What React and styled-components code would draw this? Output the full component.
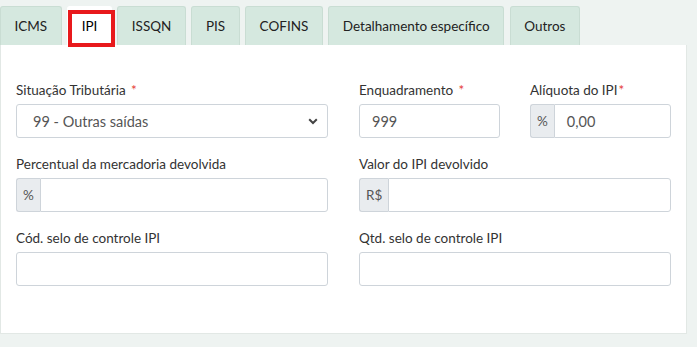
import React from "react";
import styled, { createGlobalStyle } from "styled-components";

const GlobalStyle = createGlobalStyle`
  body {
    margin: 0;
    background: #eef3f1;
    font-family: Lato, "Noto Sans", sans-serif;
    font-size: 13.5px;
    color: #333;
  }
`;

const tabs = ["ICMS", "IPI", "ISSQN", "PIS", "COFINS", "Detalhamento específico", "Outros"];

const Chevron = () => (
  <svg width="10" height="7" viewBox="0 0 10 7">
    <path d="M1.2 1.3 L5 5 L8.8 1.3" fill="none" stroke="#444" strokeWidth="2" />
  </svg>
);

const App = () => {
  return (
    <Page>
      <GlobalStyle />
      <TabBar>
        {tabs.map((t) => (
          <Tab key={t} active={t === "IPI"}>
            {t}
            {t === "IPI" && <Highlight />}
          </Tab>
        ))}
      </TabBar>
      <Panel>
        <Grid>
          <Field>
            <Label>
              Situação Tributária <Req spaced>*</Req>
            </Label>
            <Select>
              <span>99 - Outras saídas</span>
              <Chevron />
            </Select>
          </Field>
          <SubGrid>
            <Field>
              <Label>
                Enquadramento <Req spaced>*</Req>
              </Label>
              <Input>999</Input>
            </Field>
            <Field>
              <Label>
                Alíquota do IPI<Req>*</Req>
              </Label>
              <Group>
                <Addon>%</Addon>
                <Input grouped>0,00</Input>
              </Group>
            </Field>
          </SubGrid>
          <Field>
            <Label>Percentual da mercadoria devolvida</Label>
            <Group>
              <Addon>%</Addon>
              <Input grouped />
            </Group>
          </Field>
          <Field>
            <Label>Valor do IPI devolvido</Label>
            <Group>
              <Addon>R$</Addon>
              <Input grouped />
            </Group>
          </Field>
          <Field>
            <Label>Cód. selo de controle IPI</Label>
            <Input />
          </Field>
          <Field>
            <Label>Qtd. selo de controle IPI</Label>
            <Input />
          </Field>
        </Grid>
      </Panel>
    </Page>
  );
};

export default App;

const Page = styled.div`
  width: 687px;
  padding-top: 6px;
`;

const TabBar = styled.div`
  display: flex;
  gap: 5.5px;
  height: 39px;
`;

const Tab = styled.div`
  position: relative;
  padding: 0 13.5px;
  line-height: 38px;
  background: ${(p) => (p.active ? "#fff" : "#d5e8df")};
  border: 1px solid ${(p) => (p.active ? "#fff" : "#c9ddd3")};
  border-bottom: none;
  border-radius: 3px 3px 0 0;
  color: ${(p) => (p.active ? "#000" : "#222")};
  white-space: nowrap;
`;

const Highlight = styled.span`
  position: absolute;
  left: 0;
  top: 3px;
  right: -4px;
  bottom: -2px;
  border: 4px solid #e8191c;
`;

const Panel = styled.div`
  background: #fff;
  border: 1px solid #e2e8e5;
  border-top: none;
  padding: 35px 15px 47px;
`;

const Grid = styled.div`
  display: grid;
  grid-template-columns: 1fr 1fr;
  column-gap: 31px;
  row-gap: 16px;
`;

const SubGrid = styled.div`
  display: grid;
  grid-template-columns: 1fr 1fr;
  column-gap: 30px;
`;

const Field = styled.div`
  display: flex;
  flex-direction: column;
`;

const Label = styled.div`
  line-height: 20px;
  margin-bottom: 4px;
  color: #333;
`;

const Req = styled.span`
  color: #e53935;
  margin-left: ${(p) => (p.spaced ? "2px" : "1px")};
`;

const Select = styled.div`
  height: 34px;
  box-sizing: border-box;
  border: 1px solid #ced4da;
  border-radius: 3px;
  padding: 0 9px 0 16px;
  display: flex;
  align-items: center;
  justify-content: space-between;
  color: #555;
  font-size: 14.5px;
`;

const Group = styled.div`
  display: flex;
  height: 34px;
`;

const Addon = styled.div`
  display: flex;
  align-items: center;
  padding: 0 6px;
  background: #e9ecef;
  border: 1px solid #ced4da;
  border-right: none;
  border-radius: 3px 0 0 3px;
  color: #555;
`;

const Input = styled.div`
  flex: ${(p) => (p.grouped ? "1 1 0" : "none")};
  min-width: 0;
  height: 34px;
  box-sizing: border-box;
  border: 1px solid #ced4da;
  border-radius: ${(p) => (p.grouped ? "0 3px 3px 0" : "3px")};
  padding: 0 12px;
  display: flex;
  align-items: center;
  color: #555;
  font-size: 14.5px;
`;
